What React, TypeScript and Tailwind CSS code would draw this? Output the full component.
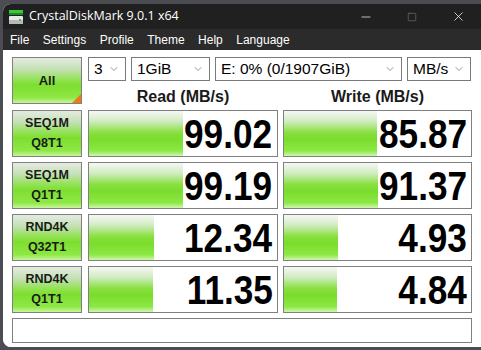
import { ChevronDown, Minus, Square, X } from "lucide-react";

const rows = [
  { a: "SEQ1M", b: "Q8T1", read: "99.02", write: "85.87", rw: 94, ww: 93 },
  { a: "SEQ1M", b: "Q1T1", read: "99.19", write: "91.37", rw: 94, ww: 94 },
  { a: "RND4K", b: "Q32T1", read: "12.34", write: "4.93", rw: 65, ww: 54 },
  { a: "RND4K", b: "Q1T1", read: "11.35", write: "4.84", rw: 64, ww: 53 },
];

const btnBg =
  "bg-[linear-gradient(to_bottom,#e4ebe2_0%,#c4e0b4_25%,#8ee24c_50%,#7ede30_60%,#8ee844_88%,#c8f4a0_100%)]";
const barBg =
  "bg-[linear-gradient(to_bottom,#f6f8f4_0%,#d2ecc4_22%,#88e040_48%,#7adc2c_62%,#8ce844_88%,#d0f6b0_100%)]";

function Select({ w, text }: { w: string; text: string }) {
  return (
    <div className={`${w} h-[24px] border border-[#7a7a7a] bg-white flex items-center justify-between pl-[5px] pr-[5px]`}>
      <span className="text-[15.5px] text-black leading-none">{text}</span>
      <ChevronDown size={12} strokeWidth={1.4} className="text-[#6a6a6a]" />
    </div>
  );
}

function Result({ value, bar }: { value: string; bar: number }) {
  return (
    <div className="relative h-[47px] flex-1 border border-[#808080] bg-white overflow-hidden">
      <div className={`absolute left-0 top-0 bottom-0 ${barBg}`} style={{ width: bar }} />
      <div className="relative h-full flex items-center justify-end pr-[4px]">
        <span className="text-[40px] font-bold leading-none text-black scale-x-[0.88] origin-right">{value}</span>
      </div>
    </div>
  );
}

export default function App() {
  return (
    <div className="w-[481px] h-[350px] bg-[#4b4d52] pt-[4px] pl-[3px] overflow-hidden" style={{ fontFamily: '"Liberation Sans", Arial, sans-serif' }}>
      <div className="w-[478px] h-[343px] rounded-tl-[8px] rounded-bl-[8px] overflow-hidden bg-white flex flex-col">
        {/* title bar */}
        <div className="h-[25px] bg-[#202020] flex items-center pl-[5px] text-white">
          <svg width="16" height="14" viewBox="0 0 16 14">
            <rect x="1" y="0" width="14" height="4" fill="#3cc83c" />
            <rect x="1" y="3" width="14" height="2" fill="#1e8a2a" />
            <rect x="1" y="6" width="14" height="8" rx="1" fill="#e8e8e8" />
            <rect x="1" y="10" width="14" height="4" fill="#b8b8b8" />
            <rect x="11" y="9" width="2" height="2" fill="#3cc83c" />
          </svg>
          <span className="ml-[5px] text-[12.5px] leading-none" style={{ fontFamily: '"Open Sans", sans-serif' }}>
            CrystalDiskMark 9.0.1 x64
          </span>
          <div className="ml-auto flex items-center h-full">
            <div className="w-[46px] flex justify-center"><Minus size={14} strokeWidth={1.2} /></div>
            <div className="w-[46px] flex justify-center"><Square size={10} strokeWidth={1.2} className="text-[#8a8a8a]" /></div>
            <div className="w-[46px] flex justify-center"><X size={15} strokeWidth={1.2} /></div>
          </div>
        </div>
        {/* menu bar */}
        <div className="h-[21px] bg-[#2b2b2b] flex items-center pl-[7px] text-white text-[12px] leading-none gap-[13.5px]">
          <span>File</span>
          <span>Settings</span>
          <span>Profile</span>
          <span>Theme</span>
          <span>Help</span>
          <span>Language</span>
        </div>
        {/* content */}
        <div className="flex-1 bg-white pl-[9px] pt-[7px] flex flex-col gap-[5px]">
          <div className="flex gap-[6px] h-[48px]">
            <div className={`relative w-[70px] h-[47px] border border-[#808080] ${btnBg} flex items-center justify-center`}>
              <span className="text-[13px] font-bold text-[#1a1a1a]">All</span>
              <div className="absolute right-0 bottom-0 w-0 h-0 border-l-[9px] border-l-transparent border-b-[9px] border-b-[#f07818]" />
            </div>
            <div className="flex flex-col w-[384px]">
              <div className="flex gap-[5px]">
                <Select w="w-[38px]" text="3" />
                <Select w="w-[79px]" text="1GiB" />
                <Select w="w-[187px]" text="E: 0% (0/1907GiB)" />
                <Select w="w-[64px]" text="MB/s" />
              </div>
              <div className="flex gap-[5px] mt-[6px] text-[16px] font-bold text-[#1a1a1a] leading-[20px]">
                <div className="w-[190px] text-center">Read (MB/s)</div>
                <div className="w-[189px] text-center">Write (MB/s)</div>
              </div>
            </div>
          </div>
          {rows.map((r, i) => (
            <div key={i} className="flex gap-[6px] h-[47px]">
              <div className={`w-[70px] h-[47px] border border-[#808080] ${btnBg} flex flex-col items-center justify-center gap-[3px] text-[12.5px] font-bold text-[#1a1a1a] leading-[17px]`}>
                <span>{r.a}</span>
                <span>{r.b}</span>
              </div>
              <div className="flex gap-[5px] w-[384px]">
                <Result value={r.read} bar={r.rw} />
                <Result value={r.write} bar={r.ww} />
              </div>
            </div>
          ))}
          <div className="w-[460px] h-[25px] border border-[#808080] bg-white" />
        </div>
      </div>
    </div>
  );
}
